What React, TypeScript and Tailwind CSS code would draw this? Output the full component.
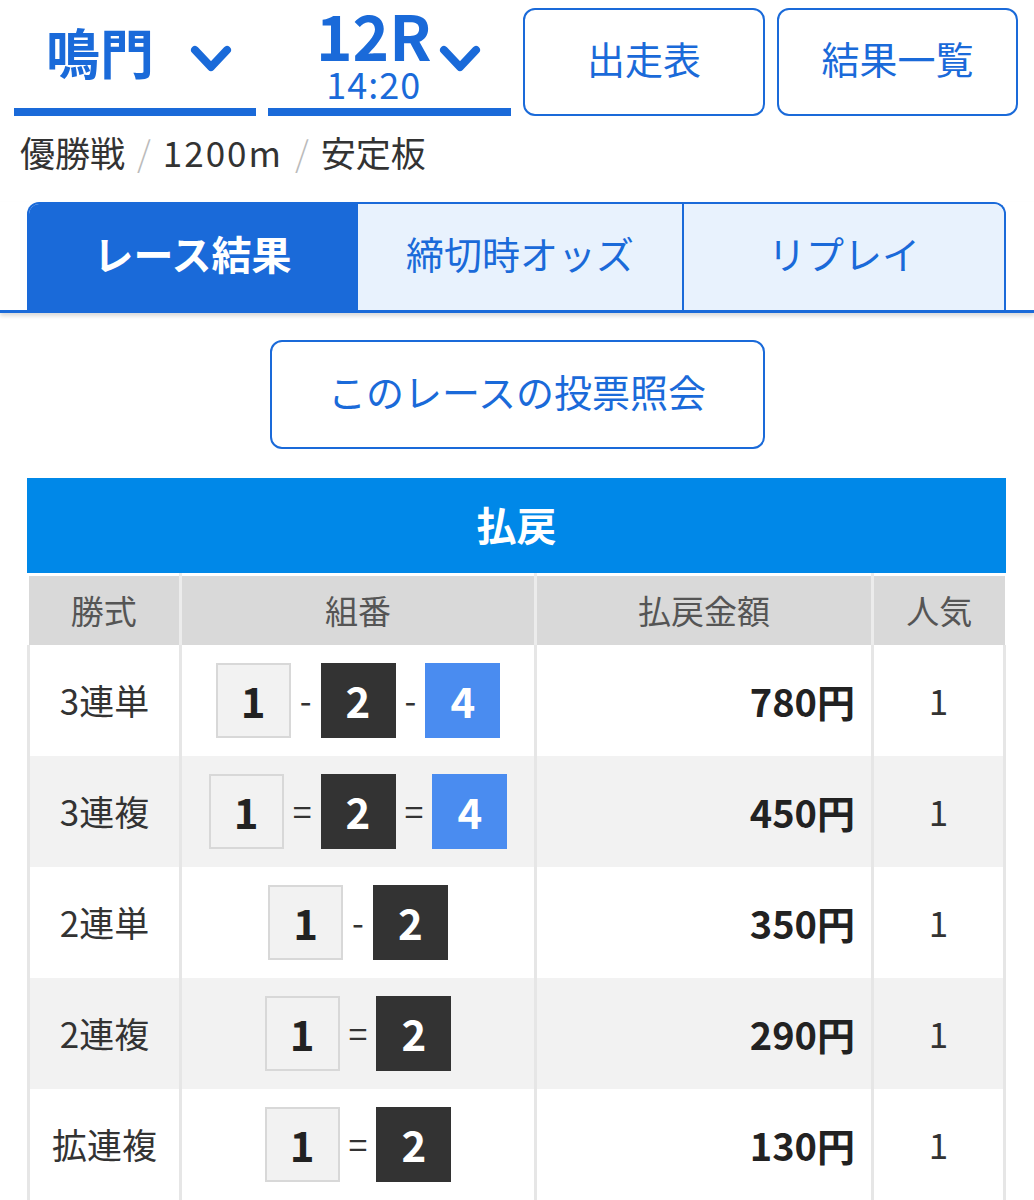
const FONT = { fontFamily: '"Noto Sans CJK JP", "Noto Sans", sans-serif' };

type Row = { kind: string; nums: number[]; sep: '-' | '='; amount: string; pop: string };

const rows: Row[] = [
  { kind: '3連単', nums: [1, 2, 4], sep: '-', amount: '780円', pop: '1' },
  { kind: '3連複', nums: [1, 2, 4], sep: '=', amount: '450円', pop: '1' },
  { kind: '2連単', nums: [1, 2], sep: '-', amount: '350円', pop: '1' },
  { kind: '2連複', nums: [1, 2], sep: '=', amount: '290円', pop: '1' },
  { kind: '拡連複', nums: [1, 2], sep: '=', amount: '130円', pop: '1' },
];

function Chevron() {
  return (
    <svg width="42" height="30" viewBox="0 0 42 30" fill="none">
      <path d="M5 5 L21 22 L37 5" stroke="#1a6ad9" strokeWidth="8" strokeLinecap="round" strokeLinejoin="round" />
    </svg>
  );
}

function Boat({ n }: { n: number }) {
  const cls =
    n === 1
      ? 'bg-[#f2f2f2] border-2 border-[#d8d8d8] text-[#222]'
      : n === 2
        ? 'bg-[#333333] text-white'
        : 'bg-[#4a8cf0] text-white';
  return (
    <span className={`flex h-[75px] w-[75px] items-center justify-center text-[42px] font-bold leading-none ${cls}`}>
      {n}
    </span>
  );
}

export default function App() {
  return (
    <div className="min-h-[1200px] w-[1034px] overflow-hidden bg-white" style={FONT}>
      {/* top selectors */}
      <div className="flex gap-3 pl-[14px] pr-4 pt-2">
        <div className="flex h-[108px] w-[242px] items-center border-b-[8px] border-[#1a6ad9] pl-8">
          <span className="pb-3 text-[54px] font-bold leading-none text-[#1a6ad9]">鳴門</span>
          <span className="ml-9 mt-1">
            <Chevron />
          </span>
        </div>
        <div className="flex h-[108px] w-[243px] items-center border-b-[8px] border-[#1a6ad9] pl-[48px]">
          <div className="flex flex-col items-center pb-3">
            <span className="text-[62px] font-bold leading-none text-[#1a6ad9]">12R</span>
            <span className="text-[36px] leading-none tracking-[1px] text-[#1a6ad9]">14:20</span>
          </div>
          <span className="ml-2 mt-1">
            <Chevron />
          </span>
        </div>
        <button className="flex h-[108px] w-[242px] items-center justify-center rounded-xl border-2 border-[#1a6ad9] pb-2 text-[38px] leading-none text-[#1a6ad9]">
          出走表
        </button>
        <button className="flex h-[108px] w-[241px] items-center justify-center rounded-xl border-2 border-[#1a6ad9] pb-2 text-[38px] leading-none text-[#1a6ad9]">
          結果一覧
        </button>
      </div>

      {/* race info */}
      <div className="mt-[14px] flex h-[44px] items-center gap-3 pl-[20px] text-[35px] leading-[44px] text-[#333]">
        <span>優勝戦</span>
        <span className="font-light text-[#bbb]">/</span>
        <span className="tracking-[2px]">1200m</span>
        <span className="font-light text-[#bbb]">/</span>
        <span>安定板</span>
      </div>

      {/* tabs */}
      <div className="mt-[28px] border-b-[3px] border-[#1a6ad9] shadow-[0_3px_4px_rgba(0,0,0,0.15)]">
        <div className="ml-[27px] flex h-[108px] w-[979px] overflow-hidden rounded-t-xl border-x-2 border-t-2 border-[#1a6ad9] leading-none">
          <div className="flex w-[327px] items-center justify-center bg-[#1a6ad9] pb-2 text-[40px] font-bold text-white">
            レース結果
          </div>
          <div className="flex w-[326px] items-center justify-center border-l-2 border-[#1a6ad9] bg-[#e8f2fd] pb-2 text-[38px] text-[#1a6ad9]">
            締切時オッズ
          </div>
          <div className="flex flex-1 items-center justify-center border-l-2 border-[#1a6ad9] bg-[#e8f2fd] pb-2 text-[38px] text-[#1a6ad9]">
            リプレイ
          </div>
        </div>
      </div>

      {/* inquiry button */}
      <div className="flex justify-center pt-[27px]">
        <button className="flex h-[109px] w-[495px] items-center justify-center rounded-xl border-2 border-[#1a6ad9] pb-2 text-[38px] leading-none text-[#1a6ad9]">
          このレースの投票照会
        </button>
      </div>

      {/* payout table */}
      <div className="ml-[27px] mt-[29px] w-[979px]">
        <div className="flex h-[95px] items-center justify-center bg-[#0088e8] pb-1 text-[40px] font-bold leading-none text-white">
          払戻
        </div>
        <table className="w-full border-collapse border-t-[3px] border-white">
          <thead>
            <tr className="h-[70px] bg-[#d9d9d9] text-[33px] font-normal text-[#555]">
              <th className="w-[152px] border-r-[3px] border-[#ececec] font-normal">勝式</th>
              <th className="w-[355px] border-r-[3px] border-[#ececec] font-normal">組番</th>
              <th className="w-[337px] border-r-[3px] border-[#ececec] font-normal">払戻金額</th>
              <th className="font-normal">人気</th>
            </tr>
          </thead>
          <tbody>
            {rows.map((r, i) => (
              <tr key={i} className={`h-[111px] ${i % 2 === 1 ? 'bg-[#f2f2f2]' : 'bg-white'}`}>
                <td className="border-x-[3px] border-[#e6e6e6] text-center text-[35px] text-[#333]">{r.kind}</td>
                <td className="border-r-[3px] border-[#e6e6e6]">
                  <div className="flex items-center justify-center">
                    {r.nums.map((n, j) => (
                      <span key={j} className="flex items-center">
                        {j > 0 && (
                          <span className="mx-[9px] text-[34px] leading-none text-[#333]">{r.sep}</span>
                        )}
                        <Boat n={n} />
                      </span>
                    ))}
                  </div>
                </td>
                <td className="border-r-[3px] border-[#e6e6e6] pr-[16px] text-right text-[38px] font-bold text-[#222]">
                  {r.amount}
                </td>
                <td className="border-r-[3px] border-[#e6e6e6] text-center text-[35px] text-[#333]">{r.pop}</td>
              </tr>
            ))}
          </tbody>
        </table>
      </div>
    </div>
  );
}
